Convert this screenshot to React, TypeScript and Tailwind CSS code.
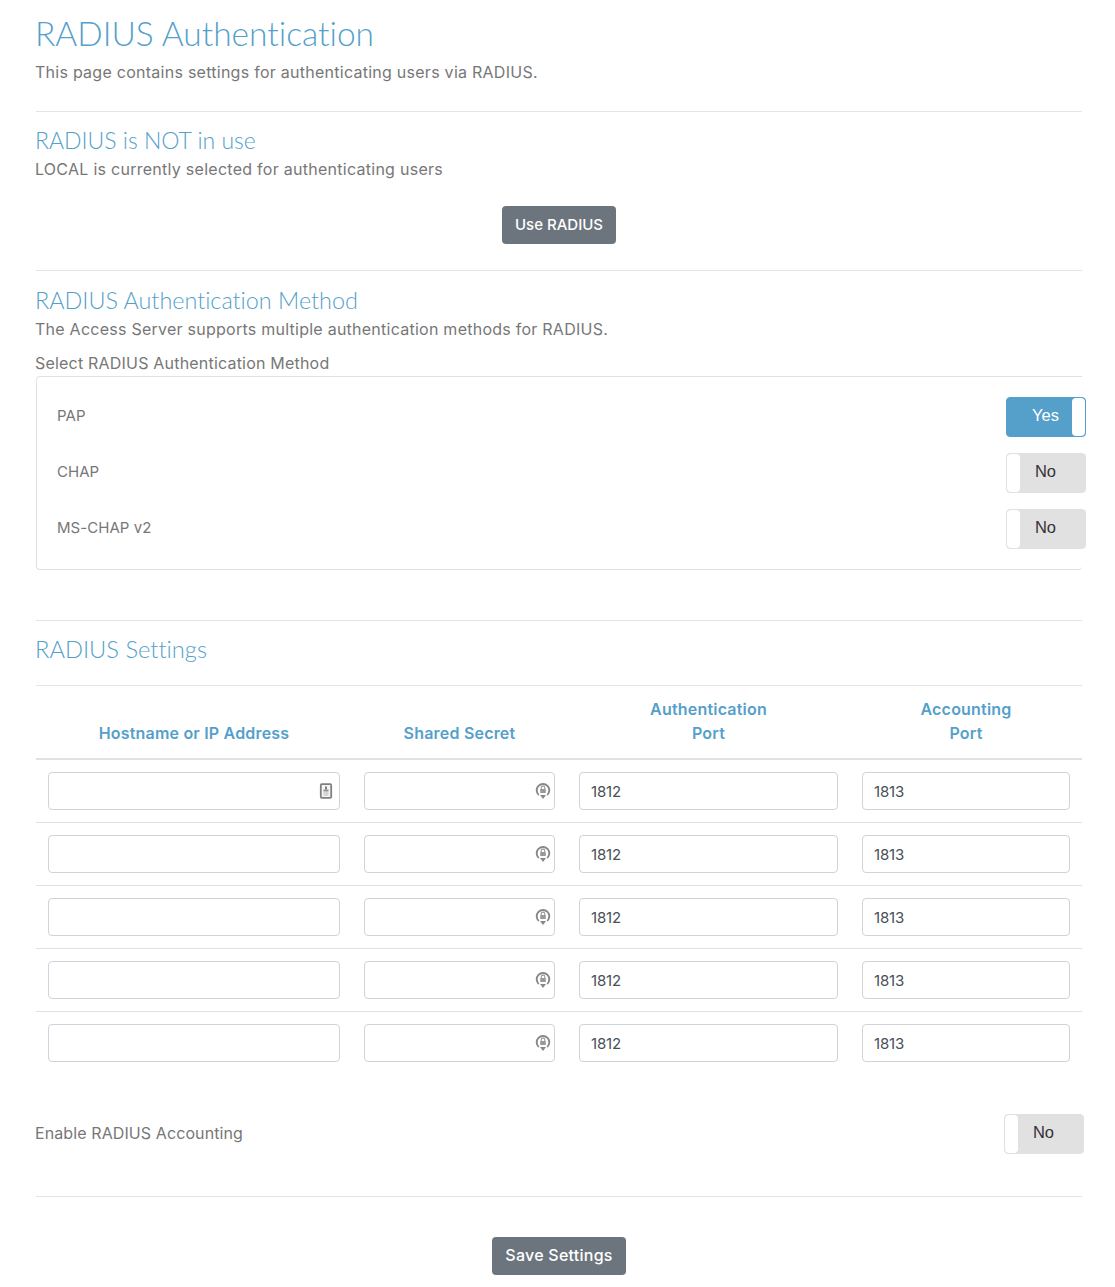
import React from "react";

const body = "font-['Inter','Liberation_Sans',sans-serif]";
const head = "font-['Lato','Liberation_Sans',sans-serif] [font-variant-ligatures:none]";

function CardIcon() {
  return (
    <svg viewBox="0 0 14 16" className="absolute right-[6px] top-[10px] h-[16px] w-[14px]">
      <rect x="1.8" y="1.2" width="10.4" height="13.6" rx="1" fill="#f4f4f4" stroke="#808080" strokeWidth="1.8" />
      <rect x="6" y="3.5" width="2" height="3" fill="#808080" />
      <rect x="4.5" y="6.5" width="5" height="2" fill="#909090" />
      <rect x="4.5" y="9.5" width="5" height="1" fill="#b5b5b5" />
      <rect x="4.5" y="11.5" width="5" height="1" fill="#b5b5b5" />
    </svg>
  );
}

function LockIcon() {
  return (
    <svg viewBox="0 0 16 18" className="absolute right-[3px] top-[9px] h-[18px] w-[16px]">
      <path d="M3.8 13A6.3 6.3 0 1 1 12.2 13" fill="none" stroke="#888" strokeWidth="1.9" />
      <path d="M5 13 8 17 11 13Z" fill="#888" />
      <path d="M6.2 7V5.9a1.8 1.8 0 0 1 3.6 0V7" fill="none" stroke="#999" strokeWidth="1.1" />
      <rect x="5.2" y="7" width="5.6" height="4" rx="0.5" fill="#999" />
    </svg>
  );
}

function Toggle({ on }: { on?: boolean }) {
  if (on) {
    return (
      <div className="flex h-10 w-20 overflow-hidden rounded-[4px] border border-[#559fcb] bg-[#559fcb]">
        <div className="flex-1 pl-3 text-center font-['Liberation_Sans',sans-serif] text-[16.5px] leading-[34px] text-white">Yes</div>
        <div className="w-[13px] rounded-[4px] bg-white" />
      </div>
    );
  }
  return (
    <div className="flex h-10 w-20 overflow-hidden rounded-[4px] border border-[#e1e1e1] bg-[#e1e1e1]">
      <div className="w-[13px] rounded-[4px] bg-white" />
      <div className="flex-1 pr-[14px] text-center font-['Liberation_Sans',sans-serif] text-[16.5px] leading-[34px] text-[#333]">No</div>
    </div>
  );
}

function Field({ value, icon }: { value?: string; icon?: React.ReactNode }) {
  return (
    <div className="relative h-[38px] rounded-[4px] border border-[#cfd3da] bg-white pl-[11px] pr-3 text-[15px] leading-[38px] tracking-[-0.2px] text-[#495057]">
      {value}
      {icon}
    </div>
  );
}

function Row({ first, last }: { first?: boolean; last?: boolean }) {
  return (
    <div className={`grid grid-cols-[316px_215px_283px_232px] ${last ? "" : "border-b border-[#dee2e6]"}`}>
      <div className="p-3"><Field icon={first ? <CardIcon /> : undefined} /></div>
      <div className="p-3"><Field icon={<LockIcon />} /></div>
      <div className="p-3"><Field value="1812" /></div>
      <div className="p-3"><Field value="1813" /></div>
    </div>
  );
}

function Method({ label, on }: { label: string; on?: boolean }) {
  return (
    <div className="flex h-14 items-center justify-between">
      <span className="pb-[2px] text-[15px] tracking-[0.05px] text-[#777]">{label}</span>
      <div className="-mr-1"><Toggle on={on} /></div>
    </div>
  );
}

export default function App() {
  return (
    <div className={`${body} h-[1287px] w-[1115px] bg-white pl-9 pr-[33px] text-[#777]`}>
      <div className="h-[111px]">
        <h1 className={`${head} -ml-px pt-[12px] text-[33.5px] font-light leading-[42px] text-[#559fcb]`}>RADIUS Authentication</h1>
        <p className="-ml-px mt-[6px] text-[16px] leading-6 tracking-[0.26px]">This page contains settings for authenticating users via RADIUS.</p>
      </div>
      <div className="h-[159px] border-t border-[#e4e4e4]">
        <h2 className={`${head} -ml-px pt-[12px] text-[23px] font-light leading-[33px] text-[#559fcb]`}>RADIUS is NOT in use</h2>
        <p className="-ml-px text-[16px] leading-[24px] tracking-[0.27px]">LOCAL is currently selected for authenticating users</p>
        <div className="mt-[25px] flex justify-center">
          <button className="h-[38px] rounded-[4px] bg-[#6c757d] px-[13px] text-[15px] font-medium text-white">Use RADIUS</button>
        </div>
      </div>
      <div className="h-[350px] border-t border-[#e4e4e4]">
        <h2 className={`${head} -ml-px pt-[12px] text-[23.4px] font-light leading-[34px] text-[#559fcb]`}>RADIUS Authentication Method</h2>
        <p className="-ml-px text-[16px] leading-[24px] tracking-[0.25px]">The Access Server supports multiple authentication methods for RADIUS.</p>
        <p className="-ml-px mt-[10px] text-[16px] leading-[24px] tracking-[0.2px]">Select RADIUS Authentication Method</p>
        <div className="mt-px h-[194px] rounded-l-[4px] rounded-br-[4px] border-y border-l border-[#e1e1e1] pl-5 pt-[12px]">
          <Method label="PAP" on />
          <Method label="CHAP" />
          <Method label="MS-CHAP v2" />
        </div>
      </div>
      <div className="h-[65px] border-t border-[#e4e4e4]">
        <h2 className={`${head} -ml-px pt-[12px] text-[23.7px] font-light leading-[32px] text-[#559fcb]`}>RADIUS Settings</h2>
      </div>
      <div className="border-t border-[#e4e4e4]">
        <div className="grid h-[74px] grid-cols-[316px_215px_283px_232px] items-end border-b-2 border-[#dee2e6] pb-[13px] text-center text-[16px] font-semibold leading-6 tracking-[0.2px] text-[#559fcb]">
          <div>Hostname or IP Address</div>
          <div>Shared Secret</div>
          <div>Authentication<br />Port</div>
          <div>Accounting<br />Port</div>
        </div>
        <Row first />
        <Row />
        <Row />
        <Row />
        <Row last />
      </div>
      <div className="mt-[40px] flex h-10 items-center justify-between">
        <span className="-ml-px pb-[2px] text-[16px] tracking-[0.1px]">Enable RADIUS Accounting</span>
        <div className="-mr-[2px]"><Toggle /></div>
      </div>
      <div className="mt-[42px] flex justify-center border-t border-[#e4e4e4] pt-[40px]">
        <button className="h-[38px] rounded-[4px] bg-[#6c757d] px-[13px] pb-[2px] text-[16px] font-medium tracking-[0.25px] text-white">Save Settings</button>
      </div>
    </div>
  );
}
